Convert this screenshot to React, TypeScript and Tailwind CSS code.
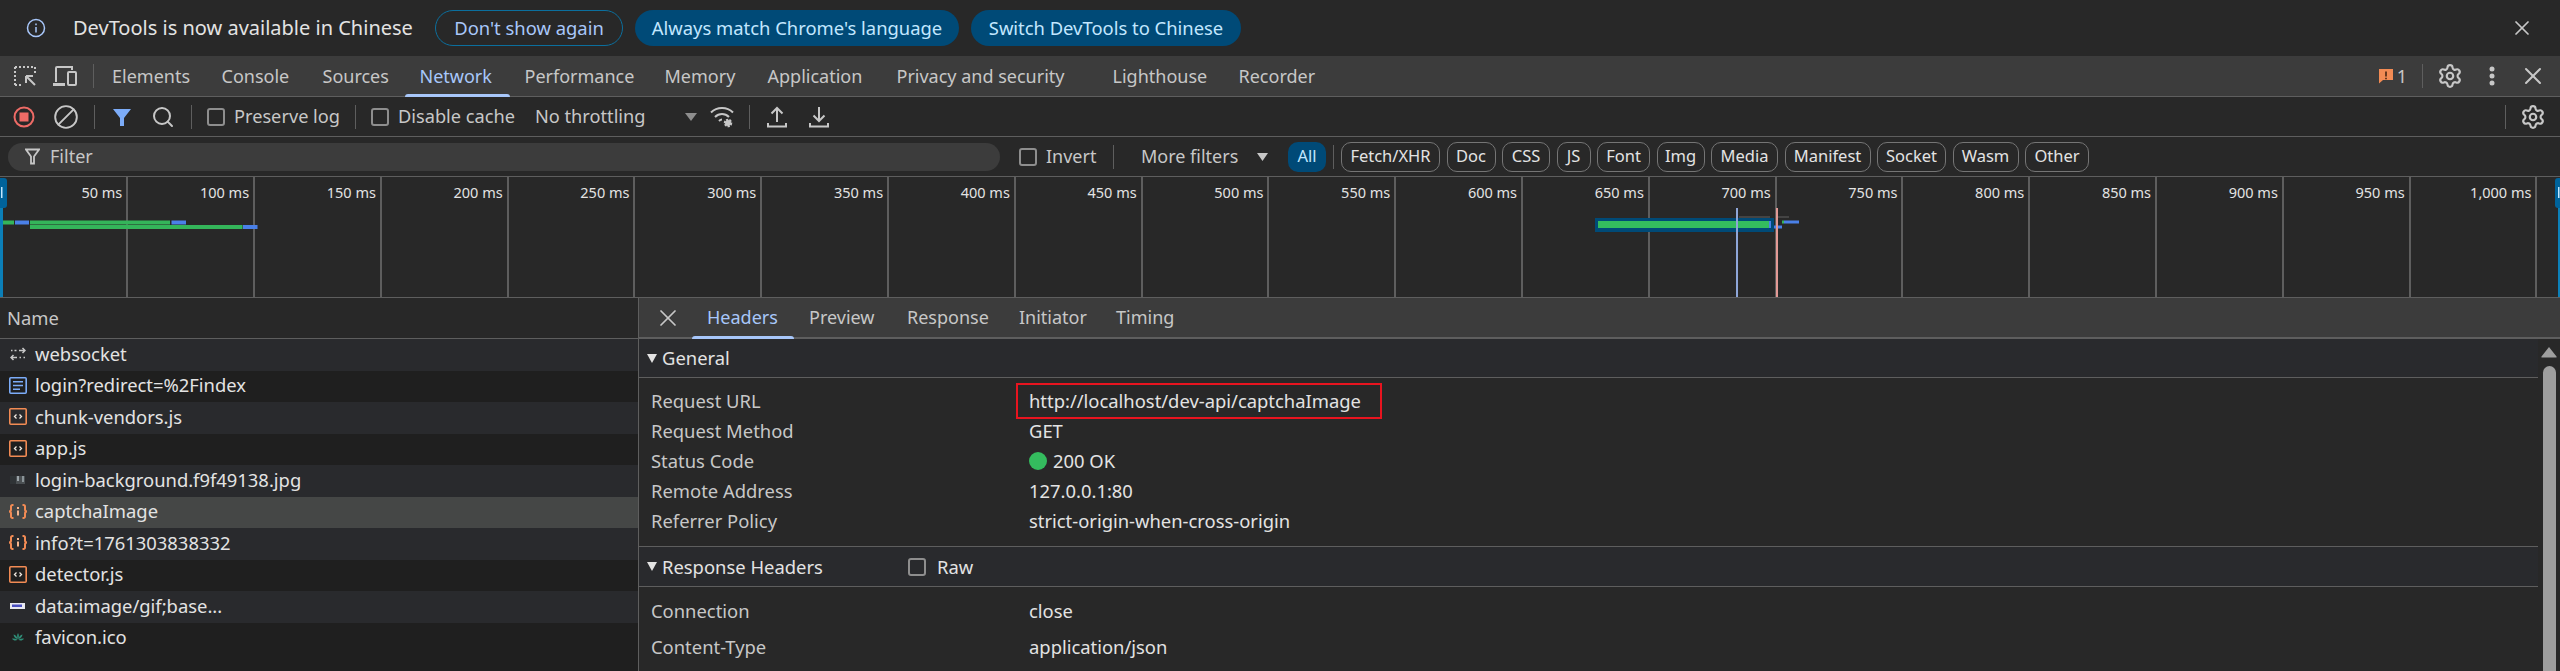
import { Settings, Search, X, Ban } from "lucide-react"

const mainTabs = [
  { label: "Elements", w: "w-[109.5px]" },
  { label: "Console", w: "w-[101px]" },
  { label: "Sources", w: "w-[97px]" },
  { label: "Network", w: "w-[105px]", active: true },
  { label: "Performance", w: "w-[140px]" },
  { label: "Memory", w: "w-[103px]" },
  { label: "Application", w: "w-[129px]" },
  { label: "Privacy and security", w: "w-[216px]" },
  { label: "Lighthouse", w: "w-[126px]" },
  { label: "Recorder", w: "w-[100px]" },
]

const chips = [
  { label: "Fetch/XHR", w: "w-[99px]" },
  { label: "Doc", w: "w-[49px]" },
  { label: "CSS", w: "w-[48px]" },
  { label: "JS", w: "w-[34px]" },
  { label: "Font", w: "w-[53px]" },
  { label: "Img", w: "w-[48px]" },
  { label: "Media", w: "w-[67px]" },
  { label: "Manifest", w: "w-[86px]" },
  { label: "Socket", w: "w-[69px]" },
  { label: "Wasm", w: "w-[66px]" },
  { label: "Other", w: "w-[64px]" },
]

const ticks = ["50 ms", "100 ms", "150 ms", "200 ms", "250 ms", "300 ms", "350 ms", "400 ms", "450 ms", "500 ms", "550 ms", "600 ms", "650 ms", "700 ms", "750 ms", "800 ms", "850 ms", "900 ms", "950 ms", "1,000 ms"]

const requests = [
  { name: "websocket", icon: "ws" },
  { name: "login?redirect=%2Findex", icon: "doc" },
  { name: "chunk-vendors.js", icon: "js" },
  { name: "app.js", icon: "js" },
  { name: "login-background.f9f49138.jpg", icon: "jpg" },
  { name: "captchaImage", icon: "json", selected: true },
  { name: "info?t=1761303838332", icon: "json" },
  { name: "detector.js", icon: "js" },
  { name: "data:image/gif;base...", icon: "gif" },
  { name: "favicon.ico", icon: "ico" },
]

const detailTabs = [
  { label: "Headers", w: "w-[102px]", active: true },
  { label: "Preview", w: "w-[98px]" },
  { label: "Response", w: "w-[112px]" },
  { label: "Initiator", w: "w-[97px]" },
  { label: "Timing", w: "w-[80px]" },
]

function FileIcon({ kind }: { kind: string }) {
  if (kind === "ws")
    return (
      <svg width="16" height="14" viewBox="0 0 16 14" fill="none" stroke="#c7c7c7" strokeWidth="1.5">
        <path d="M15 3.500H9M1 3.500h1.500M4.500 3.500H6.500M12.500 1 15 3.500 12.500 6" />
        <path d="M1 10.500h6M13.500 10.500H15M9.500 10.500H11M3.500 8 1 10.500 3.500 13" />
      </svg>
    )
  if (kind === "doc")
    return (
      <svg width="18" height="17" viewBox="0 0 18 17" fill="none" stroke="#7cacf8" strokeWidth="1.600">
        <rect x=".8" y=".8" width="16.400" height="15.400" rx="1" />
        <path d="M4 4.800h10M4 8.500h10M4 12.200h7" />
      </svg>
    )
  if (kind === "js")
    return (
      <svg width="18" height="17" viewBox="0 0 18 17" fill="none" stroke="#f28b54" strokeWidth="1.600">
        <rect x=".8" y=".8" width="16.400" height="15.400" rx="1" />
        <path d="M7.500 6.500 5.500 8.500l2 2M10.500 6.500l2 2-2 2" strokeWidth="1.300" stroke="#f0e8e0" />
      </svg>
    )
  if (kind === "json")
    return (
      <svg width="20" height="15" viewBox="0 0 20 15" fill="none" stroke="#f28b54" strokeWidth="2">
        <path d="M5.500 1H4.500A1.500 1.500 0 0 0 3 2.500v3c0 1.200-.8 2-2 2 1.200 0 2 .8 2 2v3A1.500 1.500 0 0 0 4.500 14h1" />
        <path d="M14.500 1h1A1.500 1.500 0 0 1 17 2.500v3c0 1.200.8 2 2 2-1.200 0-2 .8-2 2v3a1.500 1.500 0 0 1-1.500 1.500h-1" />
        <path d="M10 6.500v5M10 3v2" stroke="#f4b48c" />
      </svg>
    )
  if (kind === "jpg")
    return (
      <svg width="15" height="8" viewBox="0 0 15 8">
        <rect width="15" height="8" fill="#4a4f52" />
        <rect width="6" height="8" fill="#2f3336" />
        <rect x="7" width="2" height="5" fill="#9aa3a8" />
        <rect x="12" width="2" height="6" fill="#8b9498" />
      </svg>
    )
  if (kind === "gif")
    return (
      <svg width="15" height="6" viewBox="0 0 15 6">
        <rect width="15" height="6" fill="#e8e8f0" />
        <rect x="2" y="1.500" width="10" height="2.500" fill="#4a4fc0" />
      </svg>
    )
  return (
    <svg width="14" height="9" viewBox="0 0 18 12" fill="#2f8f78">
      <path d="M9 0c1.600 2.500 1.600 5.500 0 9-1.600-3.500-1.600-6.500 0-9Z" />
      <path d="M3 2c2.800.7 4.500 2.600 5.500 6-3-.7-5-2.800-5.500-6ZM15 2c-2.800.7-4.500 2.600-5.500 6 3-.7 5-2.800 5.500-6Z" />
      <path d="M1 7.500c2.500-.5 5 .2 7.500 1.500-2.500 1.500-5.500 1.200-7.500-1.500ZM17 7.500c-2.500-.5-5 .2-7.500 1.500 2.500 1.500 5.500 1.200 7.500-1.500Z" />
    </svg>
  )
}

function Checkbox({ className = "" }: { className?: string }) {
  return <span className={`block h-[18px] w-[18px] shrink-0 rounded-[3px] border-2 border-[#8e8e8e] ${className}`} />
}

function Sep({ className = "" }: { className?: string }) {
  return <span className={`block h-[24px] w-px shrink-0 bg-[#5e5e5e] ${className}`} />
}

function SectionArrow() {
  return (
    <svg className="ml-[8px]" width="10" height="9" viewBox="0 0 10 9" fill="#e3e3e3">
      <path d="M0 0h10L5 9Z" />
    </svg>
  )
}

export default function App() {
  return (
    <div className="flex h-[671px] w-[2560px] flex-col overflow-hidden bg-[#282828] font-['Noto_Sans',sans-serif] text-[18.4px] text-[#e3e3e3]">
      {/* Language infobar */}
      <div className="flex h-[56px] shrink-0 items-center bg-[#282828]">
        <svg className="ml-[26px]" width="20" height="20" viewBox="0 0 20 20" fill="none" stroke="#a8c7fa" strokeWidth="1.500">
          <circle cx="10" cy="10" r="8.500" />
          <path d="M10 9v5.500M10 5.500v1.800" />
        </svg>
        <span className="ml-[27px] w-[362px] text-[20px] whitespace-nowrap">DevTools is now available in Chinese</span>
        <span className="flex h-[36px] w-[188px] items-center justify-center rounded-full border border-[#0b6f9e] text-[#a8c7fa]">Don't show again</span>
        <span className="ml-[12px] flex h-[36px] w-[324px] items-center justify-center rounded-full bg-[#004a77] text-[#c2e7ff]">Always match Chrome's language</span>
        <span className="ml-[12px] flex h-[36px] w-[270px] items-center justify-center rounded-full bg-[#004a77] text-[#c2e7ff]">Switch DevTools to Chinese</span>
        <X className="mr-[26px] ml-auto text-[#c7c7c7]" size={24} strokeWidth={1.75} />
      </div>

      {/* Main tab bar */}
      <div className="flex h-[41px] shrink-0 items-center border-b border-[#5e5e5e] bg-[#3c3c3c] text-[18px] text-[#c7c7c7]">
        <svg className="ml-[13px]" width="24" height="24" viewBox="0 0 24 24" fill="none" stroke="#c7c7c7" strokeWidth="2">
          <path d="M2 3h20M2 3v18M22 3v8M2 21h7" strokeDasharray="2 2" />
          <path d="M13 12h7M13 12v7M13 12l9 9" />
        </svg>
        <svg className="ml-[15px]" width="26" height="24" viewBox="0 0 26 24" fill="none" stroke="#c7c7c7" strokeWidth="2">
          <path d="M4 18V4a1 1 0 0 1 1-1h15v3" />
          <path d="M1 20.500h12" strokeWidth="3" />
          <rect x="16" y="8" width="8" height="13" rx="1" />
        </svg>
        <Sep className="ml-[15px]" />
        <div className="ml-[18px] flex h-full">
          {mainTabs.map((t) => (
            <div key={t.label} className={`relative flex h-full shrink-0 items-center whitespace-nowrap ${t.w}`}>
              <span className={t.active ? "text-[#a8c7fa]" : ""}>{t.label}</span>
              {t.active && <span className="absolute bottom-[-1px] left-[-15px] h-[3px] w-[105px] rounded-t-[3px] bg-[#a8c7fa]" />}
            </div>
          ))}
        </div>
        <svg className="ml-auto" width="16" height="16" viewBox="0 0 16 16">
          <path d="M1 1h14v11H5l-4 3.500V1Z" fill="#f28b54" />
          <path d="M8 3.500v5M8 9.800v1.500" stroke="#3c1f0c" strokeWidth="1.500" />
        </svg>
        <span className="ml-[3px]">1</span>
        <Sep className="ml-[15px]" />
        <Settings className="ml-[14px]" size={26} strokeWidth={2} />
        <svg className="ml-[26px]" width="6" height="22" viewBox="0 0 6 22" fill="#c7c7c7">
          <circle cx="3" cy="4" r="2.500" />
          <circle cx="3" cy="11" r="2.500" />
          <circle cx="3" cy="18" r="2.500" />
        </svg>
        <X className="mr-[13px] ml-[24px]" size={28} strokeWidth={1.75} />
      </div>

      {/* Network toolbar */}
      <div className="flex h-[40px] shrink-0 items-center border-b border-[#5e5e5e] text-[18.2px] text-[#c7c7c7]">
        <svg className="ml-[13px]" width="22" height="22" viewBox="0 0 22 22">
          <circle cx="11" cy="11" r="9.500" fill="none" stroke="#ee6b66" strokeWidth="2" />
          <rect x="6.500" y="6.500" width="9" height="9" fill="#ee6b66" />
        </svg>
        <Ban className="ml-[18px] scale-x-[-1]" size={26} strokeWidth={1.75} />
        <Sep className="ml-[15px]" />
        <svg className="ml-[17px]" width="20" height="20" viewBox="0 0 20 20" fill="#7cacf8">
          <path d="M1 2h18l-7 9v8H8v-8L1 2Z" />
        </svg>
        <Search className="ml-[19px]" size={24} strokeWidth={2} />
        <Sep className="ml-[16px]" />
        <Checkbox className="ml-[15px]" />
        <span className="ml-[9px] w-[121px] whitespace-nowrap">Preserve log</span>
        <Sep />
        <Checkbox className="ml-[15px]" />
        <span className="ml-[9px] w-[137px] whitespace-nowrap">Disable cache</span>
        <span className="w-[150px] whitespace-nowrap">No throttling</span>
        <svg width="12" height="8" viewBox="0 0 12 8" fill="#8e8e8e">
          <path d="M0 0h12L6 8Z" />
        </svg>
        <svg className="ml-[12px]" width="26" height="24" viewBox="0 0 26 24" fill="none" stroke="#c7c7c7" strokeWidth="2">
          <path d="M2 7.500C8 1.500 18 1.500 24 7.500M6 12c4-4 10-4 14 0M10 16c1-1 2-1.500 3-1.500" />
          <circle cx="19" cy="18" r="3" fill="#c7c7c7" stroke="#c7c7c7" strokeDasharray="2 1" strokeWidth="2.500" />
        </svg>
        <Sep className="ml-[14px]" />
        <svg className="ml-[17px]" width="20" height="24" viewBox="0 0 20 24" fill="none" stroke="#c7c7c7" strokeWidth="2">
          <path d="M10 17V3M4.500 8.500 10 3l5.500 5.500M1 18v3.500h18V18" />
        </svg>
        <svg className="ml-[22px]" width="20" height="24" viewBox="0 0 20 24" fill="none" stroke="#c7c7c7" strokeWidth="2">
          <path d="M10 2v14M4.500 10.500 10 16l5.500-5.500M1 18v3.500h18V18" />
        </svg>
        <Sep className="ml-auto" />
        <Settings className="mr-[14px] ml-[14px]" size={26} strokeWidth={2} />
      </div>

      {/* Filter bar */}
      <div className="flex h-[40px] shrink-0 items-center border-b border-[#5e5e5e] text-[18px] text-[#c7c7c7]">
        <div className="ml-[8px] flex h-[28px] w-[992px] items-center rounded-full bg-[#3c3c3c]">
          <svg className="ml-[17px]" width="15" height="17" viewBox="0 0 15 17" fill="none" stroke="#c7c7c7" strokeWidth="1.800">
            <path d="M1 1.500h13L9 8.500v7H6v-7L1 1.500Z" />
          </svg>
          <span className="ml-[10px]">Filter</span>
        </div>
        <Checkbox className="ml-[19px]" />
        <span className="ml-[9px] w-[67px]">Invert</span>
        <Sep />
        <span className="ml-[27px] w-[116px] whitespace-nowrap">More filters</span>
        <svg width="11" height="8" viewBox="0 0 11 8" fill="#c7c7c7">
          <path d="M0 0h11L5.500 8Z" />
        </svg>
        <span className="ml-[20px] flex h-[30px] w-[38px] items-center justify-center rounded-[10px] bg-[#004a77] text-[16.5px] text-[#c2e7ff]">All</span>
        <Sep className="ml-[7px]" />
        <div className="ml-[7px] flex gap-[6.5px]">
          {chips.map((c) => (
            <span key={c.label} className={`flex h-[30px] items-center justify-center rounded-[10px] border border-[#757575] text-[16.5px] text-[#e3e3e3] ${c.w}`}>
              {c.label}
            </span>
          ))}
        </div>
      </div>

      {/* Overview timeline */}
      <div className="relative flex h-[121px] shrink-0 border-b border-[#5e5e5e] pl-[1.5px]">
        {ticks.map((t) => (
          <div key={t} className="h-full w-[126.8px] shrink-0 border-r-2 border-[#5e5e5e] pt-[5px] pr-[4px] text-right text-[14.5px] text-[#e3e3e3]">
            {t}
          </div>
        ))}
        <svg className="absolute inset-0" width="2560" height="120" viewBox="0 176 2560 120">
          <rect x="0" y="206" width="3" height="91" fill="#0b7fb8" />
          <rect x="3" y="219.500" width="11" height="4" fill="#34b55a" />
          <rect x="15" y="219.500" width="14" height="4" fill="#4a80e8" />
          <rect x="30" y="219.500" width="140" height="4" fill="#34b55a" />
          <rect x="171.500" y="219.500" width="14.500" height="4" fill="#4a80e8" />
          <rect x="30" y="224" width="212.500" height="4" fill="#34b55a" />
          <rect x="243" y="224" width="14.500" height="4" fill="#4a80e8" />
          <rect x="1739" y="215" width="31" height="2" fill="#444444" />
          <rect x="1778" y="215" width="11" height="2" fill="#444444" />
          <rect x="1595" y="217" width="179" height="14" fill="#004a77" />
          <rect x="1598" y="220" width="171" height="7" fill="#34bc5e" />
          <rect x="1769" y="220" width="2" height="7" fill="#4a80e8" />
          <rect x="1774" y="224.500" width="8" height="3" fill="#4a80e8" />
          <rect x="1782" y="219.500" width="2" height="3" fill="#34b55a" />
          <rect x="1784" y="219.500" width="15" height="3" fill="#4a80e8" />
          <rect x="1736" y="207" width="2" height="90" fill="#8ea6d8" />
          <rect x="1776" y="207" width="2" height="90" fill="#e39a96" />
          <rect x="-3" y="177" width="10" height="30" rx="3" fill="#00639b" />
          <rect x="1" y="186" width="1.500" height="11" fill="#c2e7ff" />
          <rect x="2558" y="206" width="2" height="91" fill="#0b7fb8" />
          <rect x="2555" y="177" width="10" height="30" rx="3" fill="#00639b" />
          <rect x="2558" y="186" width="1.500" height="11" fill="#c2e7ff" />
        </svg>
      </div>

      {/* Requests + details */}
      <div className="flex min-h-0 flex-1">
        <div className="flex w-[639px] shrink-0 flex-col border-r border-[#5e5e5e] bg-[#1f1f1f]">
          <div className="flex h-[41px] shrink-0 items-center border-b border-[#5e5e5e] bg-[#282828] pb-[1px] pl-[7px] text-[#c7c7c7]">Name</div>
          {requests.map((r, i) => (
            <div
              key={r.name}
              className={`flex h-[31.5px] shrink-0 items-center pb-[2px] ${r.selected ? "bg-[#454746]" : i % 2 === 0 ? "bg-[#292a2d]" : "bg-[#1f1f1f]"}`}
            >
              <span className="flex w-[35px] shrink-0 justify-center">
                <FileIcon kind={r.icon} />
              </span>
              <span className="whitespace-nowrap">{r.name}</span>
            </div>
          ))}
        </div>
        <div className="flex min-w-0 flex-1 flex-col">
          <div className="flex h-[41px] shrink-0 items-center border-b-2 border-[#5e5e5e] bg-[#3c3c3c] text-[18px] text-[#c7c7c7]">
            <X className="ml-[15px]" size={28} strokeWidth={1.5} />
            <div className="ml-[25px] flex h-full">
              {detailTabs.map((t) => (
                <div key={t.label} className={`relative flex h-full items-center ${t.w} ${t.active ? "text-[#a8c7fa]" : ""}`}>
                  {t.label}
                  {t.active && <span className="absolute bottom-[-2px] left-[-15px] h-[3px] w-[102px] rounded-t-[3px] bg-[#a8c7fa]" />}
                </div>
              ))}
            </div>
          </div>
          <div className="flex min-h-0 flex-1">
            <div className="min-w-0 flex-1">
              <div className="flex h-[39px] items-center border-b border-[#5e5e5e] bg-[#292a2d]">
                <SectionArrow />
                <span className="ml-[5px]">General</span>
              </div>
              <div className="border-b border-[#5e5e5e] pt-[9px] pb-[9px]">
                <div className="flex h-[30px] items-center pb-[2px] pl-[12px]">
                  <span className="w-[378px] text-[#c7c7c7]">Request URL</span>
                  <span className="relative whitespace-nowrap">
                    http://localhost/dev-api/captchaImage
                    <span className="absolute top-[-4px] left-[-13px] h-[36px] w-[366px] border-2 border-[#e8141f]" />
                  </span>
                </div>
                <div className="flex h-[30px] items-center pb-[2px] pl-[12px]">
                  <span className="w-[378px] text-[#c7c7c7]">Request Method</span>
                  <span>GET</span>
                </div>
                <div className="flex h-[30px] items-center pb-[2px] pl-[12px]">
                  <span className="w-[378px] text-[#c7c7c7]">Status Code</span>
                  <span className="h-[18px] w-[18px] rounded-full bg-[#34bc5e]" />
                  <span className="ml-[6px]">200 OK</span>
                </div>
                <div className="flex h-[30px] items-center pb-[2px] pl-[12px]">
                  <span className="w-[378px] text-[#c7c7c7]">Remote Address</span>
                  <span>127.0.0.1:80</span>
                </div>
                <div className="flex h-[30px] items-center pb-[2px] pl-[12px]">
                  <span className="w-[378px] text-[#c7c7c7]">Referrer Policy</span>
                  <span>strict-origin-when-cross-origin</span>
                </div>
              </div>
              <div className="flex h-[40px] items-center border-b border-[#5e5e5e] bg-[#292a2d]">
                <SectionArrow />
                <span className="ml-[5px] w-[246px]">Response Headers</span>
                <Checkbox />
                <span className="ml-[11px]">Raw</span>
              </div>
              <div className="pt-[6px]">
                <div className="flex h-[36px] items-center pl-[12px]">
                  <span className="w-[378px] text-[#c7c7c7]">Connection</span>
                  <span>close</span>
                </div>
                <div className="flex h-[36px] items-center pl-[12px]">
                  <span className="w-[378px] text-[#c7c7c7]">Content-Type</span>
                  <span>application/json</span>
                </div>
              </div>
            </div>
            {/* Scrollbar */}
            <div className="flex w-[22px] shrink-0 flex-col items-center bg-[#282828] pt-[7px]">
              <svg width="16" height="12" viewBox="0 0 16 12" fill="#9e9e9e">
                <path d="M8 1 15.500 10.500a.6.6 0 0 1-.5 1H1a.6.6 0 0 1-.5-1L8 1Z" />
              </svg>
              <div className="mt-[8px] w-[13px] flex-1 rounded-t-full bg-[#9e9e9e]" />
            </div>
          </div>
        </div>
      </div>
    </div>
  )
}
